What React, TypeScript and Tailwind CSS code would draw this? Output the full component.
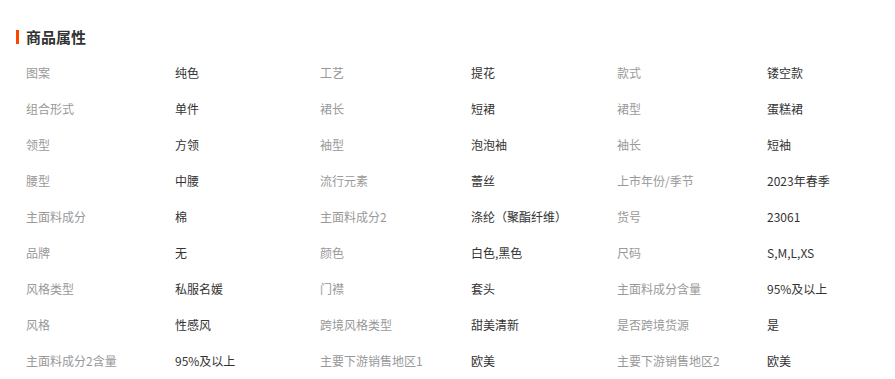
import React from 'react';

const rows: [string, string][][] = [
  [['图案', '纯色'], ['工艺', '提花'], ['款式', '镂空款']],
  [['组合形式', '单件'], ['裙长', '短裙'], ['裙型', '蛋糕裙']],
  [['领型', '方领'], ['袖型', '泡泡袖'], ['袖长', '短袖']],
  [['腰型', '中腰'], ['流行元素', '蕾丝'], ['上市年份/季节', '2023年春季']],
  [['主面料成分', '棉'], ['主面料成分2', '涤纶（聚酯纤维）'], ['货号', '23061']],
  [['品牌', '无'], ['颜色', '白色,黑色'], ['尺码', 'S,M,L,XS']],
  [['风格类型', '私服名媛'], ['门襟', '套头'], ['主面料成分含量', '95%及以上']],
  [['风格', '性感风'], ['跨境风格类型', '甜美清新'], ['是否跨境货源', '是']],
  [['主面料成分2含量', '95%及以上'], ['主要下游销售地区1', '欧美'], ['主要下游销售地区2', '欧美']],
];

export default function App() {
  return (
    <div className="w-[895px] h-[379px] overflow-hidden bg-white font-['Microsoft_YaHei','Noto_Sans_CJK_SC',sans-serif]">
      <div className="flex items-center pt-[28px] pl-[16px] h-[45px]">
        <span className="w-[3px] h-[14px] bg-[#ff4400]" />
        <h2 className="ml-[7px] text-[15px] leading-[17px] font-bold text-[#333]">商品属性</h2>
      </div>
      <div className="pl-[26px] pt-[10px]">
        {rows.map((row, i) => (
          <div
            key={i}
            className="grid grid-cols-[149px_145px_151px_146px_150px_1fr] h-[36px] items-center text-[12px] leading-[16px]"
          >
            {row.map(([label, value]) => (
              <React.Fragment key={label}>
                <span className="text-[#999] whitespace-nowrap">{label}</span>
                <span className="text-[#333] whitespace-nowrap">{value}</span>
              </React.Fragment>
            ))}
          </div>
        ))}
      </div>
    </div>
  );
}
